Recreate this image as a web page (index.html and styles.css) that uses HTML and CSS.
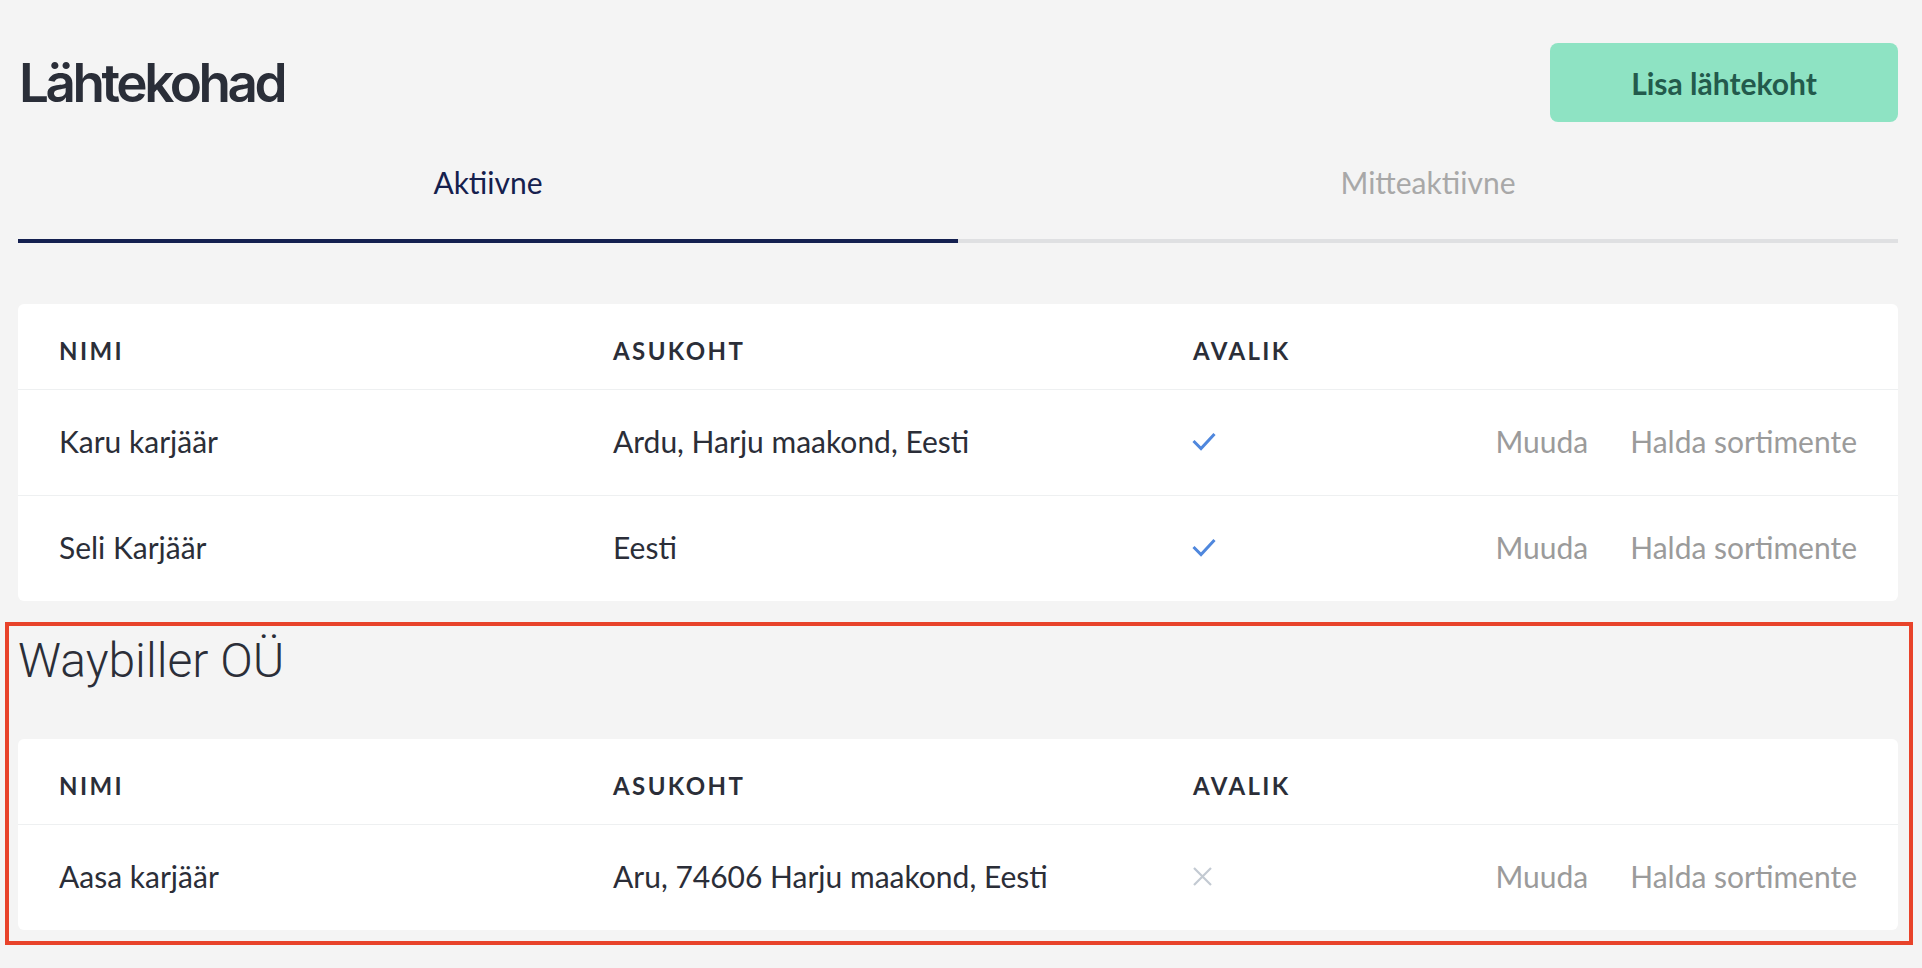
FILE: index.html
```html
<!DOCTYPE html>
<html lang="et">
<head>
    <meta charset="UTF-8">
    <meta name="viewport" content="width=device-width, initial-scale=1.0">
    <title>Lähtekohad</title>
    <link rel="stylesheet" href="styles.css">
</head>
<body>
    <div class="page">
        <div class="page-header">
            <h1 class="page-title">Lähtekohad</h1>
            <a href="#" class="add-button">Lisa lähtekoht</a>
        </div>

        <div class="tabs">
            <a href="#" class="tab tab-active">Aktiivne</a>
            <a href="#" class="tab">Mitteaktiivne</a>
        </div>

        <div class="card">
            <div class="table-row table-head">
                <span>Nimi</span>
                <span>Asukoht</span>
                <span>Avalik</span>
                <span></span>
            </div>
            <div class="table-row">
                <span>Karu karjäär</span>
                <span>Ardu, Harju maakond, Eesti</span>
                <span class="public-cell">
                    <svg class="icon-check" width="24" height="19" viewBox="0 0 24 19"><polyline points="1.5,9 9,16.5 22.5,2" fill="none" stroke="#4f87dd" stroke-width="3"/></svg>
                </span>
                <span class="row-actions">
                    <a href="#">Muuda</a>
                    <a href="#">Halda sortimente</a>
                </span>
            </div>
            <div class="table-row">
                <span>Seli Karjäär</span>
                <span>Eesti</span>
                <span class="public-cell">
                    <svg class="icon-check" width="24" height="19" viewBox="0 0 24 19"><polyline points="1.5,9 9,16.5 22.5,2" fill="none" stroke="#4f87dd" stroke-width="3"/></svg>
                </span>
                <span class="row-actions">
                    <a href="#">Muuda</a>
                    <a href="#">Halda sortimente</a>
                </span>
            </div>
        </div>

        <div class="company">
            <h2 class="company-name">Waybiller OÜ</h2>
            <div class="card">
                <div class="table-row table-head">
                    <span>Nimi</span>
                    <span>Asukoht</span>
                    <span>Avalik</span>
                    <span></span>
                </div>
                <div class="table-row">
                    <span>Aasa karjäär</span>
                    <span>Aru, 74606 Harju maakond, Eesti</span>
                    <span class="public-cell">
                        <svg class="icon-cross" width="19" height="19" viewBox="0 0 19 19"><path d="M1 1 L18 18 M18 1 L1 18" fill="none" stroke="#c3cad2" stroke-width="2.2"/></svg>
                    </span>
                    <span class="row-actions">
                        <a href="#">Muuda</a>
                        <a href="#">Halda sortimente</a>
                    </span>
                </div>
            </div>
        </div>
    </div>
</body>
</html>
```

FILE: styles.css
```css
/* Reset default margin and padding */
body {
    margin: 0;
    padding: 0;
    background-color: #f4f4f4;
    font-family: Lato, "Open Sans", sans-serif;
    color: #2b2e38;
}

.page {
    padding: 43px 24px 0 18px;
}

/* Header with title and button */
.page-header {
    display: flex;
    align-items: center;
    justify-content: space-between;
}

.page-title {
    margin: 0 0 0 1px;
    font-family: Inter, "Noto Sans", sans-serif;
    font-weight: 600;
    font-size: 53px;
    letter-spacing: -0.065em;
    line-height: 64px;
    color: #2a2e38;
}

.add-button {
    display: flex;
    align-items: center;
    justify-content: center;
    width: 348px;
    height: 79px;
    background-color: #8ee3c3;
    border-radius: 8px;
    color: #235a4c;
    font-weight: 700;
    font-size: 30px;
    text-decoration: none;
}

/* Tabs */
.tabs {
    display: flex;
}

.tab {
    flex: 1;
    padding: 42px 0 39px;
    text-align: center;
    font-size: 30px;
    line-height: 36px;
    color: #a8a8a8;
    text-decoration: none;
    border-bottom: 4px solid #dfe0e2;
}

.tab-active {
    color: #15204d;
    border-bottom-color: #142050;
}

/* Tables */
.card {
    margin-top: 61px;
    background-color: #fff;
    border-radius: 6px;
}

.table-row {
    display: grid;
    grid-template-columns: 554px 580px 1fr auto;
    align-items: center;
    padding: 33px 41px 36px;
    font-size: 30px;
    line-height: 36px;
    border-top: 1px solid #eef0f1;
}

.table-head {
    padding: 32px 41px 24px;
    border-top: none;
    font-size: 24px;
    line-height: 29px;
    font-weight: 700;
    text-transform: uppercase;
    letter-spacing: 0.1em;
}

.public-cell {
    display: flex;
    align-items: center;
    height: 36px;
}

.icon-check {
    margin-left: -1px;
}

.row-actions {
    display: flex;
    gap: 42px;
}

.row-actions a {
    color: #9b9b9b;
    text-decoration: none;
}

/* Company section, highlighted */
.company {
    margin: 21px -15px 0 -13px;
    padding: 7px 11px 11px 9px;
    border: 4px solid #e8432a;
}

.company-name {
    margin: 0 0 50px;
    font-family: Roboto, "Noto Sans", sans-serif;
    font-weight: 300;
    font-size: 48px;
    line-height: 56px;
    color: #2b2e38;
}

.company .card {
    margin-top: 0;
}
```
